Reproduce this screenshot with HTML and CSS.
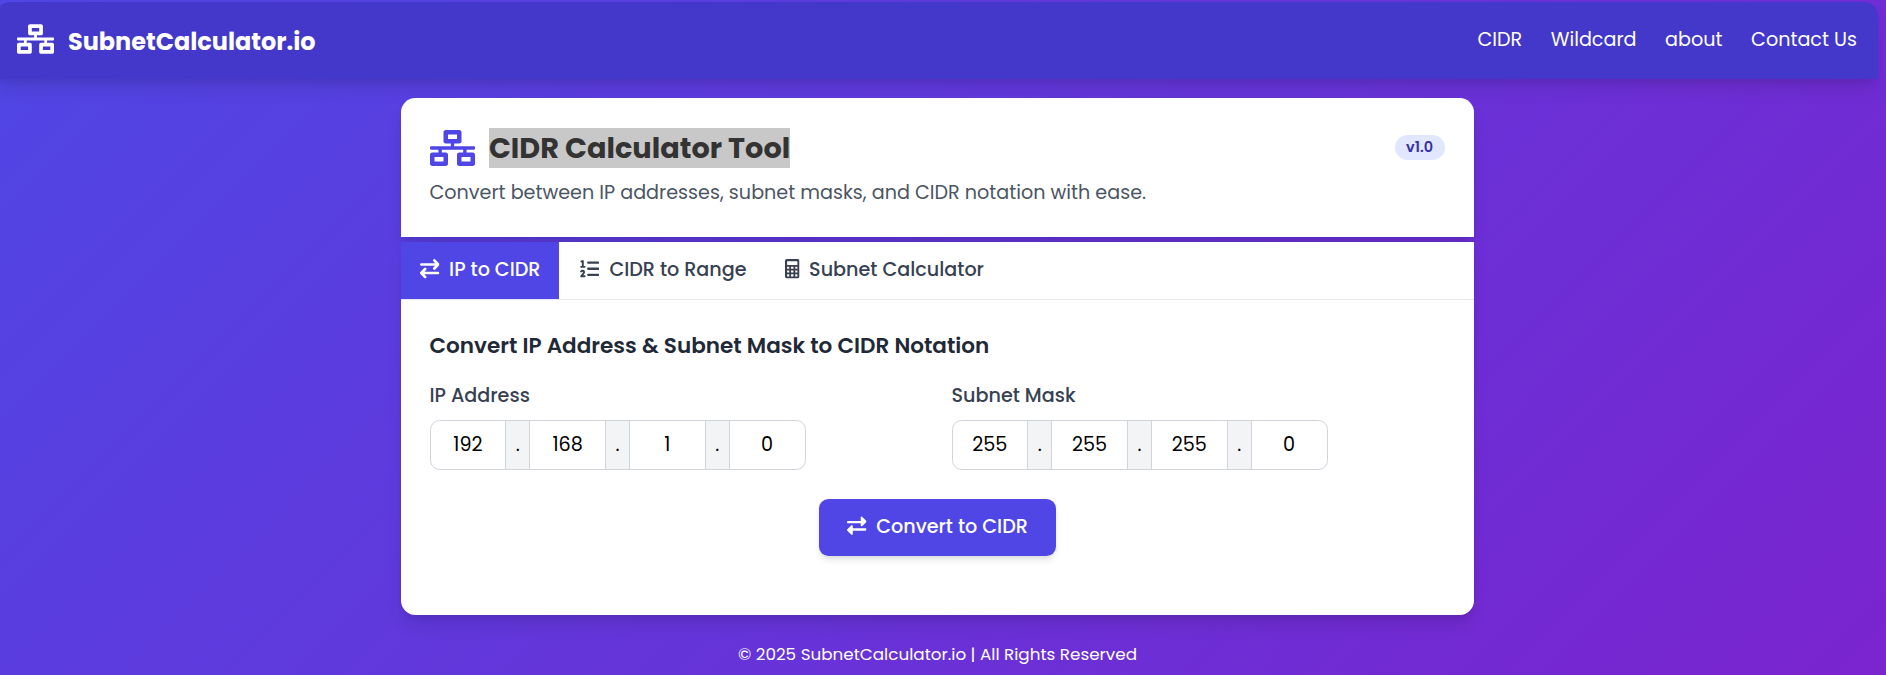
FILE: index.html
```html
<!DOCTYPE html>
<html lang="en">
<head>
<meta charset="utf-8">
<title>CIDR Calculator Tool - SubnetCalculator.io</title>
<link rel="stylesheet" href="styles.css">
</head>
<body>
<svg class="defs" aria-hidden="true">
  <symbol id="network" viewBox="0 0 640 512"><path d="M640 264v-16c0-8.84-7.16-16-16-16H344v-40h72c17.67 0 32-14.33 32-32V32c0-17.67-14.33-32-32-32H224c-17.67 0-32 14.33-32 32v128c0 17.67 14.33 32 32 32h72v40H16c-8.84 0-16 7.16-16 16v16c0 8.84 7.16 16 16 16h104v40H32c-17.67 0-32 14.33-32 32v128c0 17.67 14.33 32 32 32h192c17.67 0 32-14.33 32-32V352c0-17.67-14.33-32-32-32h-56v-40h304v40h-56c-17.67 0-32 14.33-32 32v128c0 17.67 14.33 32 32 32h192c17.67 0 32-14.33 32-32V352c0-17.67-14.33-32-32-32h-88v-40h104c8.84 0 16-7.16 16-16zM256 128V64h128v64H256zm-64 320H64v-64h128v64zm384 0H448v-64h128v64z"/></symbol>
  <symbol id="swap" viewBox="0 0 512 512"><g fill="none" stroke="currentColor" stroke-width="70" stroke-linecap="round" stroke-linejoin="round"><path d="M36 144H470M376 38L476 144L376 250M476 368H42M136 262L36 368L136 474"/></g></symbol>
  <symbol id="swap-solid" viewBox="0 0 512 512"><path d="M0 168v-16c0-13.255 10.745-24 24-24h336V40c0-21.367 25.899-32.042 40.971-16.971l104 104c9.372 9.373 9.372 24.569 0 33.941l-104 104C385.956 279.982 360 269.456 360 248v-56H24c-13.255 0-24-10.745-24-24zm488 152H152v-56c0-21.314-25.862-32.08-40.971-16.971l-104 104c-9.372 9.373-9.372 24.569 0 33.941l104 104C126.057 503.997 152 493.437 152 472v-88h336c13.255 0 24-10.745 24-24v-16c0-13.255-10.745-24-24-24z"/></symbol>
  <symbol id="list-ol" viewBox="0 0 512 512"><g fill="none" stroke="currentColor"><path stroke-width="60" stroke-linecap="round" d="M216 96H482M216 256H482M216 416H482"/><path stroke-width="50" stroke-linecap="round" stroke-linejoin="round" d="M36 66L74 54V204M28 206H120M30 330C52 296 112 302 108 346C106 376 62 402 34 454H122"/></g></symbol>
  <symbol id="calculator" viewBox="0 0 384 512"><path fill-rule="evenodd" d="M48 0H336Q384 0 384 48V464Q384 512 336 512H48Q0 512 0 464V48Q0 0 48 0ZM56 58V156H328V58ZM56 200V256H112V200ZM160 200V256H224V200ZM272 200V256H328V200ZM56 302V358H112V302ZM160 302V358H224V302ZM272 302V358H328V302ZM56 404V460H112V404ZM160 404V460H224V404ZM272 404V460H328V404Z"/></symbol>
</svg>

<header class="site-header">
  <div class="brand"><svg class="brand-icon"><use href="#network"/></svg><span>SubnetCalculator.io</span></div>
  <nav class="site-nav"><a>CIDR</a><a>Wildcard</a><a>about</a><a>Contact Us</a></nav>
</header>

<main class="tool">
  <section class="intro">
    <div class="title-row">
      <svg class="title-icon"><use href="#network"/></svg>
      <h1 class="title">CIDR Calculator Tool</h1>
      <span class="badge">v1.0</span>
    </div>
    <p class="subtitle">Convert between IP addresses, subnet masks, and CIDR notation with ease.</p>
  </section>

  <section class="panel">
    <div class="tabs">
      <div class="tab tab-active"><svg class="icon"><use href="#swap"/></svg><span>IP to CIDR</span></div>
      <div class="tab tab-second"><svg class="icon"><use href="#list-ol"/></svg><span>CIDR to Range</span></div>
      <div class="tab"><svg class="icon icon-narrow"><use href="#calculator"/></svg><span>Subnet Calculator</span></div>
    </div>
    <div class="content">
      <h2 class="heading">Convert IP Address &amp; Subnet Mask to CIDR Notation</h2>
      <div class="fields">
        <div class="field">
          <div class="label">IP Address</div>
          <div class="octets"><span class="octet">192</span><span class="dot">.</span><span class="octet">168</span><span class="dot">.</span><span class="octet">1</span><span class="dot">.</span><span class="octet">0</span></div>
        </div>
        <div class="field">
          <div class="label">Subnet Mask</div>
          <div class="octets"><span class="octet">255</span><span class="dot">.</span><span class="octet">255</span><span class="dot">.</span><span class="octet">255</span><span class="dot">.</span><span class="octet">0</span></div>
        </div>
      </div>
      <button class="convert"><svg class="icon"><use href="#swap-solid"/></svg><span>Convert to CIDR</span></button>
    </div>
  </section>
</main>

<footer class="site-footer">© 2025 SubnetCalculator.io | All Rights Reserved</footer>
</body>
</html>
```
FILE: styles.css
```css
* { box-sizing: border-box; }
html { height: 100%; }
body {
  margin: 0;
  padding-top: 2px;
  height: 675px;
  overflow: hidden;
  font-family: Poppins, Inter, "Open Sans", sans-serif;
  font-size: 19.17px;
  background: linear-gradient(135deg, #4f46e5, #7a24ce);
}
svg { fill: currentColor; flex: none; }
.defs { display: none; }

.site-header {
  width: 1882px;
  height: 77px;
  margin-left: -4px;
  padding: 0 21px;
  display: flex;
  align-items: flex-start;
  justify-content: space-between;
  color: #fff;
  background: #4338ca;
  border-radius: 14.4px 14.4px 0 0;
  box-shadow: 0 12px 18px -3px rgba(0, 0, 0, .1), 0 5px 7px -2px rgba(0, 0, 0, .06);
}
.brand {
  display: flex;
  align-items: flex-start;
  gap: 14px;
  padding-top: 22px;
  font-size: 23.95px;
  line-height: 36px;
  font-weight: 700;
}
.brand-icon { width: 37px; height: 30px; }
.site-nav {
  display: flex;
  gap: 28.6px;
  padding-top: 24px;
  line-height: 28px;
}

.tool {
  width: 1073px;
  margin: 19px 0 0 401px;
  display: flex;
  flex-direction: column;
  gap: 5px;
}
.intro {
  height: 139px;
  padding: 30px 28.5px 0;
  background: #fff;
  border-radius: 14.4px 14.4px 0 0;
  box-shadow: 0 12px 18px -3px rgba(0, 0, 0, .1), 0 5px 7px -2px rgba(0, 0, 0, .06);
}
.title-row { display: flex; align-items: center; height: 40px; }
.title-icon { width: 45px; height: 36px; color: #4f46e5; }
.title {
  margin: 0 auto 0 14.4px;
  font-size: 28.75px;
  line-height: 40px;
  font-weight: 700;
  color: #333;
  background: #c8c8c8;
}
.badge {
  width: 50px;
  height: 25px;
  margin: -2px 1px 0 0;
  border-radius: 13px;
  font-size: 14.4px;
  line-height: 25px;
  font-weight: 600;
  text-align: center;
  color: #3730a3;
  background: #e0e7ff;
}
.subtitle {
  margin: 10px 0 0;
  line-height: 29px;
  color: #4b5563;
  white-space: nowrap;
}

.panel {
  height: 373px;
  background: #fff;
  border-radius: 0 0 14.4px 14.4px;
  box-shadow: 0 12px 18px -3px rgba(0, 0, 0, .1), 0 5px 7px -2px rgba(0, 0, 0, .06);
}
.tabs {
  display: flex;
  height: 58px;
  border-bottom: 1px solid #e5e7eb;
  font-weight: 500;
  color: #374151;
}
.tab {
  display: flex;
  align-items: center;
  gap: 9.4px;
  padding: 0 19.2px 3px;
  white-space: nowrap;
}
.tab-active { width: 158px; color: #fff; background: #4f46e5; }
.tab-second { width: 207px; padding-left: 20.5px; gap: 10.4px; }
.icon { width: 19.5px; height: 19.5px; }
.icon-narrow { width: 14.5px; }

.content { padding: 30px 28.5px 0; }
.heading {
  margin: 0;
  font-size: 21.56px;
  line-height: 32px;
  font-weight: 600;
  color: #1f2937;
}
.fields { display: grid; grid-template-columns: 522px 1fr; padding-top: 19px; }
.label {
  line-height: 29px;
  margin-bottom: 10px;
  font-weight: 500;
  color: #374151;
}
.octets {
  width: 376px;
  height: 50px;
  display: flex;
  overflow: hidden;
  border: 1px solid #d1d5db;
  border-radius: 9.6px;
  line-height: 47px;
  text-align: center;
  color: #000;
}
.octet { flex: 1; }
.dot {
  width: 25px;
  border: solid #d1d5db;
  border-width: 0 1px;
  background: #f3f4f6;
}
.convert {
  width: 237px;
  height: 57px;
  margin: 29px auto 0;
  padding: 0 0 3px;
  display: flex;
  align-items: center;
  justify-content: center;
  gap: 9.6px;
  border: 0;
  border-radius: 9.6px;
  font: inherit;
  font-weight: 500;
  color: #fff;
  background: #4f46e5;
  box-shadow: 0 5px 7px -1px rgba(0, 0, 0, .1), 0 2px 4px -1px rgba(0, 0, 0, .06);
}
.site-footer {
  width: 1875px;
  padding-top: 25px;
  font-size: 16.8px;
  line-height: 28px;
  text-align: center;
  color: #fff;
}
```
